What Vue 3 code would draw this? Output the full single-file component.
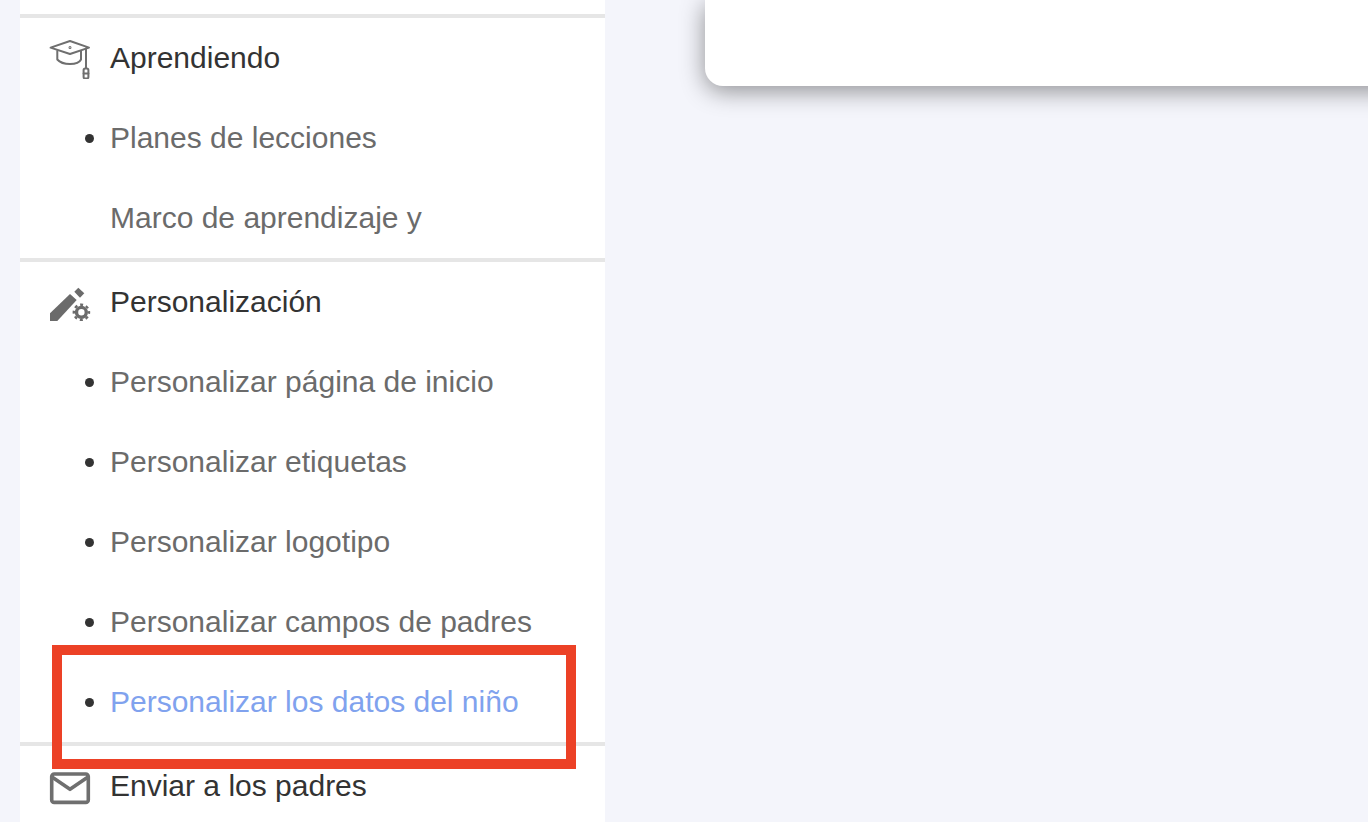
<script setup>
const sections = [
  { title: 'Aprendiendo', icon: 'cap', items: [
    { label: 'Planes de lecciones', dot: true },
    { label: 'Marco de aprendizaje y', dot: false }
  ] },
  { title: 'Personalización', icon: 'pen', items: [
    { label: 'Personalizar página de inicio', dot: true },
    { label: 'Personalizar etiquetas', dot: true },
    { label: 'Personalizar logotipo', dot: true },
    { label: 'Personalizar campos de padres', dot: true },
    { label: 'Personalizar los datos del niño', dot: true, active: true }
  ] },
  { title: 'Enviar a los padres', icon: 'mail', items: [] }
]
</script>

<template>
  <div class="page">
    <aside class="sidebar">
      <section v-for="s in sections" :key="s.title" class="section">
        <div class="head">
          <svg class="icon" viewBox="0 0 42 42" aria-hidden="true">
            <g v-if="s.icon === 'cap'" fill="none" stroke="#6f6f6f" stroke-width="2" stroke-linejoin="round" stroke-linecap="round">
              <path d="M21 4 L1.6 10.6 L21 17 L40 10.6 Z" />
              <path d="M8.3 14 V22.5 C11 25.6 15.5 27 21 27 C26.5 27 30.5 25.6 32 22.5 V14" />
              <path d="M37 11.6 V31" />
              <rect x="34.6" y="31.5" width="4.8" height="10" rx="1.6" />
              <path d="M34.6 36.5 H39.4" />
              <circle cx="21" cy="10.6" r=".5" />
            </g>
            <g v-else-if="s.icon === 'pen'">
              <path fill="#6b6b6b" d="M1 32.3 L21 13 L27.7 19 L8.3 40 L1 40 Z" />
              <path fill="#6b6b6b" d="M25.3 10.7 L29.3 6.7 L35.3 12.3 L31 16.7 Z" />
              <circle cx="32.4" cy="31.3" r="4.9" fill="none" stroke="#6b6b6b" stroke-width="3.4" />
              <circle cx="32.4" cy="31.3" r="7.6" fill="none" stroke="#6b6b6b" stroke-width="2.4" stroke-dasharray="3 2.97" stroke-dashoffset="1.5" />
            </g>
            <g v-else fill="none" stroke="#6f6f6f" stroke-width="3.6" stroke-linejoin="round">
              <rect x="2.7" y="9" width="36.6" height="28.4" rx="2.5" />
              <path d="M3 12 L21 24.3 L39 12" />
            </g>
          </svg>
          <span class="title">{{ s.title }}</span>
        </div>
        <ul v-if="s.items.length" class="list">
          <li
            v-for="item in s.items"
            :key="item.label"
            class="item"
            :class="{ dot: item.dot, active: item.active }"
          >{{ item.label }}</li>
        </ul>
      </section>
    </aside>
    <main class="main">
      <div class="card"></div>
    </main>
    <div class="highlight"></div>
  </div>
</template>

<style>
html, body { margin: 0; background: #f4f5fb; }
</style>

<style scoped>
.page {
  position: relative;
  display: flex;
  height: 822px;
  overflow: hidden;
  background: #f4f5fb;
  font-family: "Liberation Sans", Arial, sans-serif;
  font-size: 30px;
}
.sidebar {
  flex: 0 0 585px;
  margin-left: 20px;
  padding-top: 14px;
  background: #fff;
}
.section { border-top: 4px solid #e6e6e6; }
.head {
  display: flex;
  align-items: center;
  gap: 19px;
  height: 80px;
  padding-left: 29px;
}
.icon { width: 42px; height: 42px; flex: none; }
.title { color: #333; }
.list { margin: 0; padding: 0; list-style: none; }
.item {
  position: relative;
  height: 80px;
  line-height: 80px;
  padding-left: 90px;
  color: #6b6b6b;
}
.item.dot::before {
  content: "";
  position: absolute;
  left: 65px;
  top: 36px;
  width: 9px;
  height: 9px;
  border-radius: 50%;
  background: #333;
}
.item.active { color: #80a2ee; }
.main { flex: 1; padding-left: 100px; min-width: 0; }
.card {
  width: 800px;
  height: 86px;
  background: #fff;
  border-radius: 0 0 0 18px;
  box-shadow: 0 5px 24px rgba(0, 0, 0, .42);
}
.highlight {
  position: absolute;
  left: 52px;
  top: 645px;
  width: 524px;
  height: 124px;
  box-sizing: border-box;
  border: 10px solid #ec4126;
  pointer-events: none;
}
</style>
